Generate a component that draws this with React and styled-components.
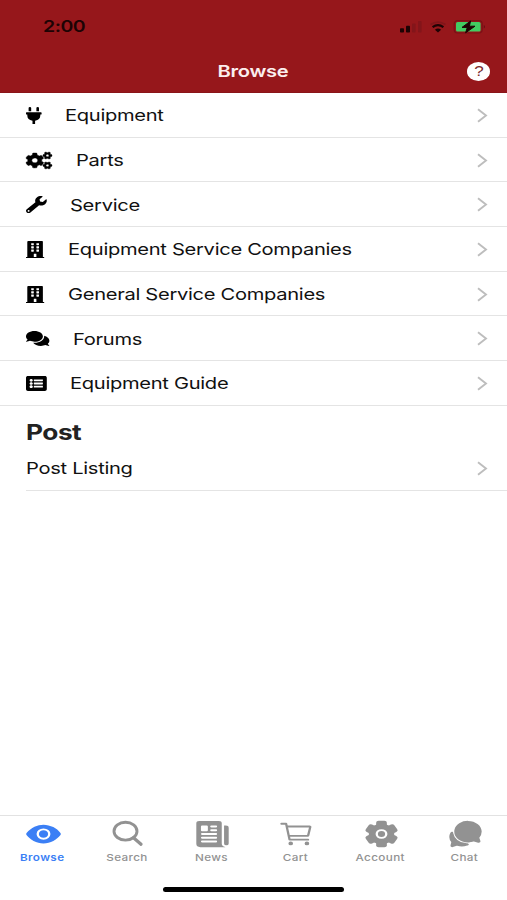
import styled, { createGlobalStyle } from "styled-components";
import {
  FaPlug,
  FaCogs,
  FaWrench,
  FaBuilding,
  FaComments,
  FaListAlt,
} from "react-icons/fa";
import {
  IoEye,
  IoNewspaper,
  IoCartOutline,
  IoChatbubbles,
} from "react-icons/io5";

const GlobalStyle = createGlobalStyle`
  * {
    box-sizing: border-box;
  }
  body {
    margin: 0;
    background-color: #fff;
    font-family: Inter, "Liberation Sans", sans-serif;
  }
`;

const Screen = styled.div`
  display: flex;
  flex-direction: column;
  width: 507px;
  height: 900px;
  overflow: hidden;
  background-color: #fff;
`;

const Header = styled.header`
  height: 93px;
  flex-shrink: 0;
  background-color: #96171b;
  border-bottom: 1px solid #8a1519;
`;

const StatusBar = styled.div`
  display: flex;
  align-items: center;
  justify-content: space-between;
  height: 50px;
  padding: 3px 21px 0 43px;
`;

const StatusIcons = styled.div`
  display: flex;
  align-items: center;
`;

const NavBar = styled.div`
  display: grid;
  grid-template-columns: 1fr auto 1fr;
  align-items: center;
  height: 42px;
  padding-right: 17px;
  padding-left: 17px;
`;

const HelpButton = styled.button`
  display: flex;
  justify-content: center;
  align-items: center;
  justify-self: end;
  grid-column: 3;
  width: 23px;
  height: 19px;
  padding: 0;
  border: none;
  border-radius: 50%;
  background-color: #fff;
`;

// wide lettering: the glyphs are stretched, not only spaced
const Label = styled.span`
  display: inline-block;
  white-space: nowrap;
  font-size: ${(props) => props.$size || 16.5}px;
  font-weight: ${(props) => props.$weight || 400};
  color: ${(props) => props.$color || "#111"};
  letter-spacing: ${(props) => props.$spacing ?? -0.25}px;
  line-height: 1.2;
  transform: scaleX(${(props) => props.$stretch || 1.22});
  transform-origin: ${(props) => props.$origin || "left"} center;
`;

const Title = styled(Label)`
  grid-column: 2;
  padding-top: 1px;
`;

const RowLabel = styled(Label)`
  padding-top: 1.5px;
`;

const List = styled.ul`
  margin: 0;
  padding: 0;
  list-style: none;
`;

const Row = styled.li`
  display: flex;
  align-items: center;
  height: 44.7px;
  padding: 1px 19px 0 25.5px;
  border-bottom: 1px solid #e4e4e4;
`;

const RowIcon = styled.span`
  display: flex;
  width: ${(props) => props.$width}px;
  margin-right: 24.2px;
  color: #000;

  svg {
    width: 100%;
    height: 17px;
    overflow: visible;
  }
`;

const RowChevron = styled.svg`
  margin-left: auto;
`;

const Section = styled.section`
  flex: 1;
`;

const SectionTitle = styled.h2`
  display: flex;
  align-items: center;
  height: 40px;
  margin: 0;
  padding: 15px 0 0 25.5px;
`;

const InsetRow = styled(Row)`
  height: 44.7px;
  margin-left: 25.5px;
  padding-left: 0;
`;

const TabBar = styled.nav`
  display: grid;
  grid-template-columns: repeat(6, 1fr);
  height: 58px;
  border-top: 1px solid #e2e2e2;
`;

const Tab = styled.div`
  display: flex;
  flex-direction: column;
  align-items: center;
  padding-top: 3px;
  color: ${(props) => (props.$active ? "#3b7ff5" : "#929292")};

  > svg {
    width: 37px;
    height: 30px;
    margin: 0 0 3px 2px;
  }
`;

const HomeArea = styled.div`
  display: flex;
  justify-content: center;
  height: 27px;
  padding-top: 14px;
`;

const HomeIndicator = styled.div`
  width: 181px;
  height: 5px;
  border-radius: 3px;
  background-color: #000;
`;

const SearchIcon = () => (
  <svg width="37" height="30" viewBox="0 0 37 30" fill="none">
    <ellipse cx="16.5" cy="12.2" rx="11.5" ry="8.9" stroke="currentColor" strokeWidth="2.9" />
    <path d="M24.5 18.7L32 25.2" stroke="currentColor" strokeWidth="3.3" strokeLinecap="round" />
  </svg>
);

const GearIcon = () => (
  <svg width="37" height="30" viewBox="0 0 512 512" preserveAspectRatio="none">
    <g fill="currentColor">
      <circle cx="256" cy="256" r="176" />
      <rect x="182" y="28" width="148" height="456" rx="34" />
      <rect x="182" y="28" width="148" height="456" rx="34" transform="rotate(60 256 256)" />
      <rect x="182" y="28" width="148" height="456" rx="34" transform="rotate(120 256 256)" />
    </g>
    <circle cx="256" cy="256" r="66" fill="none" stroke="#fff" strokeWidth="32" />
  </svg>
);

const rows = [
  { label: "Equipment", icon: FaPlug, width: 15.6 },
  { label: "Parts", icon: FaCogs, width: 26, stroke: 12 },
  { label: "Service", icon: FaWrench, width: 20.8 },
  { label: "Equipment Service Companies", icon: FaBuilding, width: 18.2 },
  { label: "General Service Companies", icon: FaBuilding, width: 18.2 },
  { label: "Forums", icon: FaComments, width: 23.4 },
  { label: "Equipment Guide", icon: FaListAlt, width: 20.8 },
];

const tabs = [
  { label: "Browse", icon: IoEye, active: true },
  { label: "Search", icon: SearchIcon },
  { label: "News", icon: IoNewspaper },
  { label: "Cart", icon: IoCartOutline },
  { label: "Account", icon: GearIcon },
  { label: "Chat", icon: IoChatbubbles },
];

const Chevron = () => (
  <RowChevron width="12" height="15" viewBox="0 0 12 15" fill="none">
    <path d="M2 1.2L10 7.5L2 13.8" stroke="#bdbdbd" strokeWidth="1.9" />
  </RowChevron>
);

const StatusGlyphs = () => (
  <StatusIcons>
    <svg width="88" height="16" viewBox="0 0 88 16">
      <rect x="2" y="9.2" width="4" height="4.3" rx="0.8" fill="#1d0304" />
      <rect x="8" y="6.8" width="4" height="6.7" rx="0.8" fill="#1d0304" />
      <rect x="14" y="4.5" width="3.6" height="9" rx="0.8" fill="#83151a" />
      <rect x="20" y="2" width="3.6" height="11.5" rx="0.8" fill="#83151a" />
      <g fill="none">
        <path d="M32.5 5.6Q40 0.8 47.5 5.6" stroke="#80151a" strokeWidth="1.8" />
        <path d="M34.6 8.1Q40 4.2 45.4 8.1" stroke="#1d0304" strokeWidth="2.3" />
      </g>
      <path d="M36.9 10.8Q40 8.4 43.1 10.8L40 13.4Z" fill="#1d0304" />
      <rect x="56.2" y="1.6" width="28" height="12.4" rx="3.4" fill="none" stroke="#7a1216" strokeWidth="1.2" />
      <rect x="58" y="3" width="24.6" height="9.6" rx="1.6" fill="#42cc62" />
      <path d="M85.8 6Q88 7.7 85.8 9.6Z" fill="#5f0f12" />
      <path
        d="M72.6 2L64 8.4H69.3L67.6 13.8L77 7.2H71.4Z"
        fill="#1d0304"
        stroke="#1d0304"
        strokeWidth="1"
        strokeLinejoin="round"
      />
    </svg>
  </StatusIcons>
);

const App = () => {
  return (
    <>
      <GlobalStyle />
      <Screen>
        <Header>
          <StatusBar>
            <Label $size={16} $weight={600} $color="#1d0304" $spacing={-0.4}>
              2:00
            </Label>
            <StatusGlyphs />
          </StatusBar>
          <NavBar>
            <Title $weight={600} $color="#fbeeee" $origin="center">
              Browse
            </Title>
            <HelpButton>
              <Label $size={14} $weight={500} $color="#7c2a2d" $origin="center">
                ?
              </Label>
            </HelpButton>
          </NavBar>
        </Header>
        <List>
          {rows.map(({ label, icon: Icon, width, stroke }) => (
            <Row key={label}>
              <RowIcon $width={width}>
                <Icon preserveAspectRatio="none" strokeWidth={stroke || 0} />
              </RowIcon>
              <RowLabel>{label}</RowLabel>
              <Chevron />
            </Row>
          ))}
        </List>
        <Section>
          <SectionTitle>
            <Label $size={21.5} $weight={700} $color="#222" $spacing={-0.4}>
              Post
            </Label>
          </SectionTitle>
          <InsetRow as="div">
            <RowLabel>Post Listing</RowLabel>
            <Chevron />
          </InsetRow>
        </Section>
        <TabBar>
          {tabs.map(({ label, icon: Icon, active }) => (
            <Tab key={label} $active={active}>
              <Icon preserveAspectRatio="none" />
              <Label
                $size={9.6}
                $weight={active ? 600 : 500}
                $color="inherit"
                $origin="center"
                $spacing={0.3}
              >
                {label}
              </Label>
            </Tab>
          ))}
        </TabBar>
        <HomeArea>
          <HomeIndicator />
        </HomeArea>
      </Screen>
    </>
  );
};

export default App;
